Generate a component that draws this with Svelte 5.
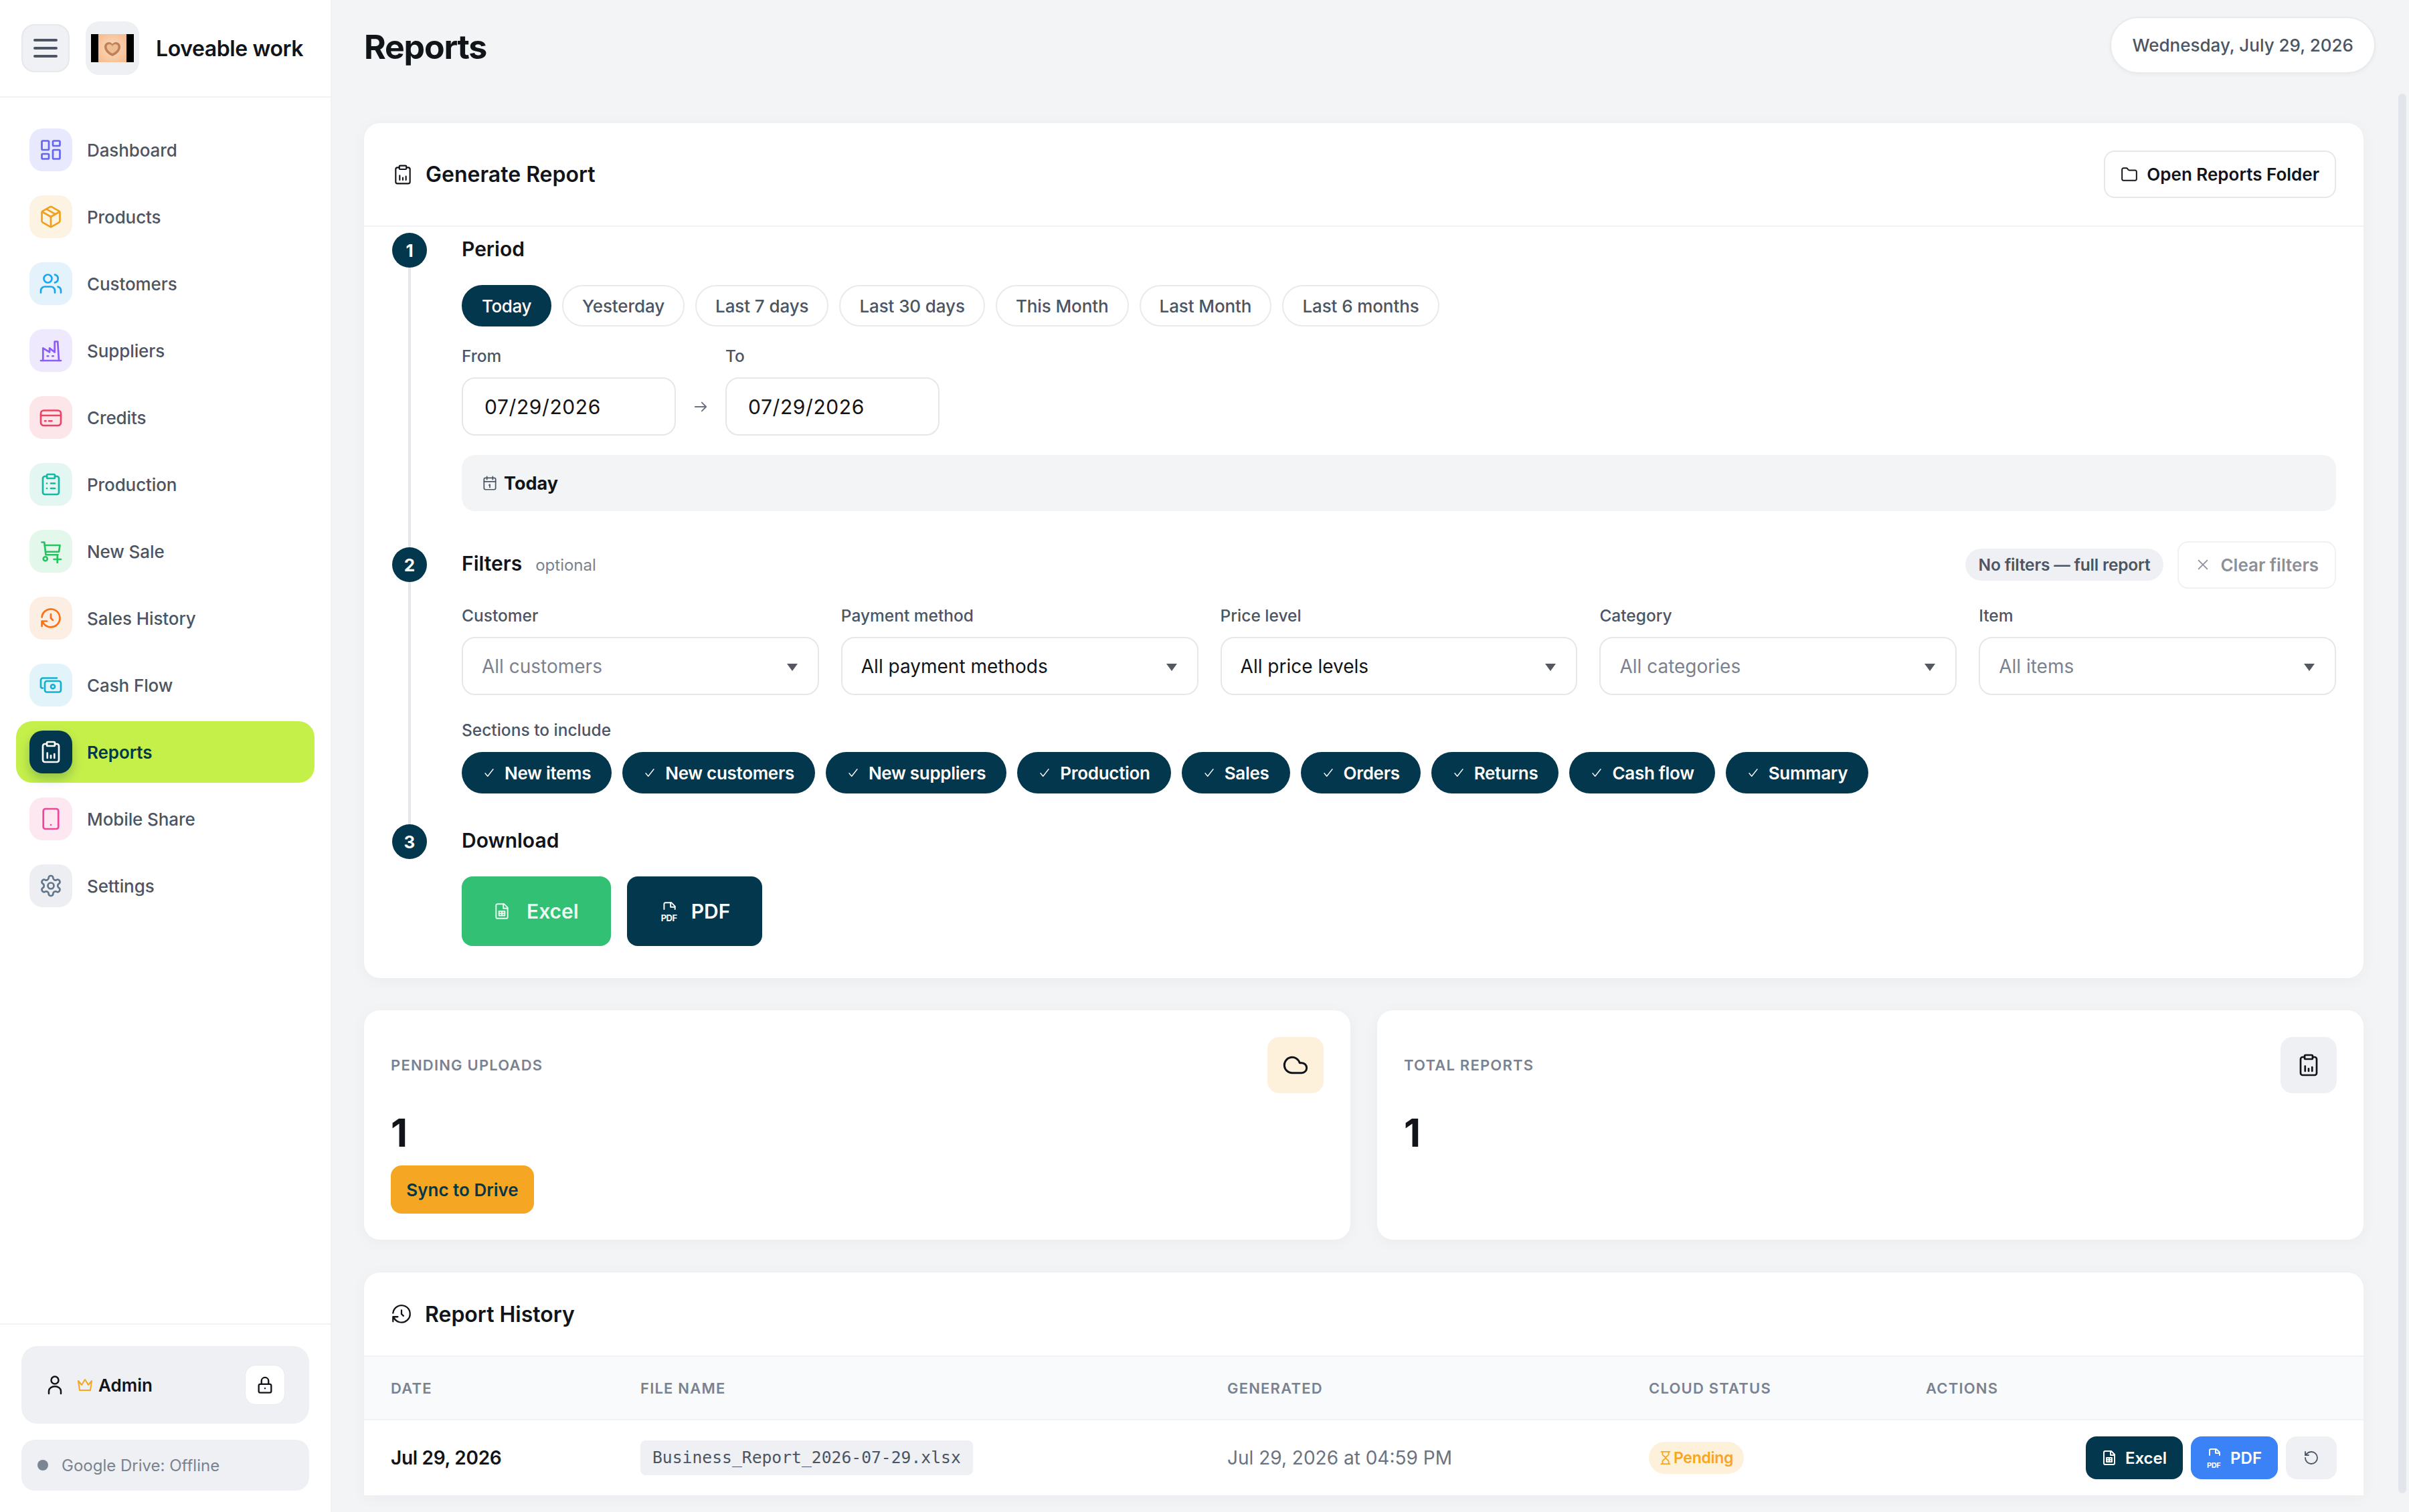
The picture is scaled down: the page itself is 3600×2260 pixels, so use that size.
<script>
	const icons = {
		dashboard: '<rect x="3" y="3" width="7" height="9" rx="1"/><rect x="14" y="3" width="7" height="5" rx="1"/><rect x="14" y="12" width="7" height="9" rx="1"/><rect x="3" y="16" width="7" height="5" rx="1"/>',
		box: '<path d="M21 8a2 2 0 0 0-1-1.730l-7-4a2 2 0 0 0-2 0l-7 4A2 2 0 0 0 3 8v8a2 2 0 0 0 1 1.730l7 4a2 2 0 0 0 2 0l7-4A2 2 0 0 0 21 16Z"/><path d="m3.300 7 8.700 5 8.700-5"/><path d="M12 22V12"/><path d="m7.500 4.300 9 5.100"/>',
		users: '<circle cx="9" cy="7" r="4"/><path d="M2 21v-2a4 4 0 0 1 4-4h6a4 4 0 0 1 4 4v2"/><path d="M16 3.100a4 4 0 0 1 0 7.800"/><path d="M22 21v-2a4 4 0 0 0-3-3.900"/>',
		factory: '<path d="M2 22h20"/><path d="M4.200 22V9.600l6.500 4V9.600l5.100 4V3h3L20 22"/><path d="M8.500 17.500h1M13.500 17.500h1"/>',
		card: '<rect x="2" y="5" width="20" height="15" rx="3"/><path d="M2 10h20"/><path d="M6 15.500h1M10 15.500h3"/>',
		clipboard: '<rect x="8" y="2" width="8" height="4" rx="1"/><path d="M16 4h2a2 2 0 0 1 2 2v14a2 2 0 0 1-2 2H6a2 2 0 0 1-2-2V6a2 2 0 0 1 2-2h2"/><path d="M12 11h4M12 16h4M8 11h.01M8 16h.01"/>',
		cart: '<path d="M3 3h2.500l1.500 12.500h12"/><path d="M6 6h15l-1 6.500H7"/><circle cx="6.500" cy="19.500" r="2"/><path d="M15 20h7M18.500 16.500v7"/>',
		history: '<path d="M12 8v4l2 2"/><path d="M3.050 11a9 9 0 1 1 .5 4m-.5 5v-5h5"/>',
		cash: '<rect x="6" y="8" width="16" height="11" rx="2"/><circle cx="14" cy="13.500" r="2"/><path d="M18 5H4a2 2 0 0 0-2 2v7a2 2 0 0 0 2 1"/>',
		report: '<rect x="8" y="2" width="8" height="4" rx="1"/><path d="M16 4h2a2 2 0 0 1 2 2v14a2 2 0 0 1-2 2H6a2 2 0 0 1-2-2V6a2 2 0 0 1 2-2h2"/><path d="M8.500 18v-5M12 18v-2.500M15.500 18v-4"/>',
		tablet: '<rect x="4.500" y="2" width="15" height="20" rx="2"/><path d="M12 18h.01"/>',
		gear: '<path d="M12.220 2h-.440a2 2 0 0 0-2 2v.180a2 2 0 0 1-1 1.730l-.430.250a2 2 0 0 1-2 0l-.150-.080a2 2 0 0 0-2.730.730l-.220.380a2 2 0 0 0 .730 2.730l.150.100a2 2 0 0 1 1 1.720v.510a2 2 0 0 1-1 1.740l-.150.090a2 2 0 0 0-.730 2.730l.220.380a2 2 0 0 0 2.730.730l.150-.080a2 2 0 0 1 2 0l.430.250a2 2 0 0 1 1 1.730V20a2 2 0 0 0 2 2h.440a2 2 0 0 0 2-2v-.180a2 2 0 0 1 1-1.730l.430-.250a2 2 0 0 1 2 0l.150.080a2 2 0 0 0 2.730-.730l.220-.390a2 2 0 0 0-.730-2.730l-.150-.080a2 2 0 0 1-1-1.740v-.500a2 2 0 0 1 1-1.740l.150-.090a2 2 0 0 0 .730-2.730l-.220-.380a2 2 0 0 0-2.730-.730l-.150.080a2 2 0 0 1-2 0l-.430-.250a2 2 0 0 1-1-1.730V4a2 2 0 0 0-2-2z"/><circle cx="12" cy="12" r="3"/>',
		calendar: '<rect x="4" y="5" width="16" height="16" rx="2"/><path d="M8 3v4M16 3v4M4 10h16M11 15l1-1v4"/>',
		folder: '<path d="M20 20a2 2 0 0 0 2-2V8a2 2 0 0 0-2-2h-7.900a2 2 0 0 1-1.700-.900l-.800-1.200A2 2 0 0 0 7.900 3H4a2 2 0 0 0-2 2v13a2 2 0 0 0 2 2Z"/>',
		cloud: '<path d="M17.500 19H9a7 7 0 1 1 6.700-9h1.800a4.500 4.500 0 1 1 0 9Z"/>',
		sheet: '<path d="M15 2H6a2 2 0 0 0-2 2v16a2 2 0 0 0 2 2h12a2 2 0 0 0 2-2V7Z"/><path d="M14 2v6h6"/><path d="M8 12h8v6H8zM12 12v6M8 15h8"/>',
		pdf: '<path d="M5 11V4a2 2 0 0 1 2-2h8l5 5v4"/><path d="M14 2v6h6"/>',
		hourglass: '<path d="M5 2h14M5 22h14"/><path d="M7 2v4.500c0 1.500 5 4 5 5.500s-5 4-5 5.500V22M17 2v4.500c0 1.500-5 4-5 5.500s5 4 5 5.500V22"/>',
		refresh: '<path d="M3 12a9 9 0 1 0 9-9 9.750 9.750 0 0 0-6.740 2.740L3 8"/><path d="M3 3v5h5"/>',
		lock: '<rect x="4" y="11" width="16" height="11" rx="2"/><path d="M7.500 11V7a4.500 4.500 0 0 1 9 0v4"/><path d="M12 16.500h.01"/>'
	};

	const nav = [
		{ label: 'Dashboard', icon: 'dashboard', tone: 'indigo' },
		{ label: 'Products', icon: 'box', tone: 'amber' },
		{ label: 'Customers', icon: 'users', tone: 'sky' },
		{ label: 'Suppliers', icon: 'factory', tone: 'violet' },
		{ label: 'Credits', icon: 'card', tone: 'rose' },
		{ label: 'Production', icon: 'clipboard', tone: 'teal' },
		{ label: 'New Sale', icon: 'cart', tone: 'green' },
		{ label: 'Sales History', icon: 'history', tone: 'orange' },
		{ label: 'Cash Flow', icon: 'cash', tone: 'cyan' },
		{ label: 'Reports', icon: 'report', tone: 'active' },
		{ label: 'Mobile Share', icon: 'tablet', tone: 'pink' },
		{ label: 'Settings', icon: 'gear', tone: 'slate' }
	];

	const periods = ['Today', 'Yesterday', 'Last 7 days', 'Last 30 days', 'This Month', 'Last Month', 'Last 6 months'];

	const filters = [
		{ label: 'Customer', value: 'All customers', empty: true },
		{ label: 'Payment method', value: 'All payment methods', empty: false },
		{ label: 'Price level', value: 'All price levels', empty: false },
		{ label: 'Category', value: 'All categories', empty: true },
		{ label: 'Item', value: 'All items', empty: true }
	];

	const sections = ['New items', 'New customers', 'New suppliers', 'Production', 'Sales', 'Orders', 'Returns', 'Cash flow', 'Summary'];
</script>

{#snippet icon(name, size = 36, stroke = 1.8)}
	<svg class="icon" width={size} height={size} viewBox="0 0 24 24" fill="none" stroke="currentColor" stroke-width={stroke} stroke-linecap="round" stroke-linejoin="round">
		{@html icons[name]}
	</svg>
{/snippet}

<div class="app">
	<aside class="sidebar">
		<div class="brand">
			<button class="burger" type="button" aria-label="Menu">
				<span></span><span></span><span></span>
			</button>
			<div class="logo">
				<svg width="64" height="42" viewBox="0 0 64 42">
					<defs>
						<radialGradient id="peach" cx="50%" cy="50%" r="70%">
							<stop offset="0" stop-color="#fbdcc0" />
							<stop offset="1" stop-color="#f6b98c" />
						</radialGradient>
					</defs>
					<rect width="64" height="42" fill="#000" />
					<rect x="11" width="42" height="42" fill="url(#peach)" />
					<path d="M32 33c-7-3-12-8-12-14 0-4 3-7 6.500-7 2.500 0 4.500 1 5.500 3 1-2 3-3 5.500-3 3.500 0 6.500 3 6.500 7 0 6-5 11-12 14Z" fill="#bf8258" />
					<path d="M32 29c-5-2.500-8.500-6-8.500-10 0-2.500 2-4 4-4s3.500 1 4.500 3c1-2 2.500-3 4.500-3s4 1.500 4 4c0 4-3.500 7.500-8.500 10Z" fill="#f0bd92" />
				</svg>
			</div>
			<span class="brand-name">Loveable work</span>
		</div>

		<nav class="nav">
			{#each nav as item}
				<div class="nav-item {item.tone}">
					<span class="nav-icon">{@render icon(item.icon)}</span>
					<span class="nav-label">{item.label}</span>
				</div>
			{/each}
		</nav>

		<div class="side-foot">
			<div class="user">
				<span class="user-person">
					<svg width="24" height="30" viewBox="0 0 24 30" fill="none" stroke="currentColor" stroke-width="2.500" stroke-linecap="round">
						<circle cx="12" cy="8" r="5.500" />
						<path d="M3 28v-4a8 6 0 0 1 18 0v4" />
					</svg>
				</span>
				<svg class="crown" width="24" height="20" viewBox="0 0 24 20" fill="none" stroke="#f5a623" stroke-width="2" stroke-linejoin="round">
					<path d="M2 4l5 6 5-8 5 8 5-6-2 14H4Z" />
				</svg>
				<span class="user-name">Admin</span>
				<button class="lock" type="button" aria-label="Lock">{@render icon('lock', 28, 2)}</button>
			</div>
			<div class="drive"><i></i>Google Drive: Offline</div>
		</div>
	</aside>

	<main class="main">
		<header class="topbar">
			<h1>Reports</h1>
			<div class="today-pill">Wednesday, July 29, 2026</div>
		</header>

		<div class="content">
			<section class="card">
				<div class="card-head">
					<h2>{@render icon('report', 32, 1.6)}Generate Report</h2>
					<button class="folder-btn" type="button">{@render icon('folder', 26, 1.8)}Open Reports Folder</button>
				</div>

				<div class="steps">
					<div class="step">
						<div class="rail"><b>1</b><span></span></div>
						<div class="step-body">
							<div class="step-title"><h3>Period</h3></div>
							<div class="chips">
								{#each periods as p, i}
									<button class="chip" class:on={i === 0} type="button">{p}</button>
								{/each}
							</div>
							<div class="dates">
								<label class="field">
									<span>From</span>
									<input type="text" value="07/29/2026" />
								</label>
								<span class="arrow">
									<svg width="22" height="22" viewBox="0 0 24 24" fill="none" stroke="currentColor" stroke-width="2" stroke-linecap="round" stroke-linejoin="round"><path d="M3 12h18M14 5l7 7-7 7" /></svg>
								</span>
								<label class="field">
									<span>To</span>
									<input type="text" value="07/29/2026" />
								</label>
							</div>
							<div class="range">{@render icon('calendar', 26, 1.6)}<strong>Today</strong></div>
						</div>
					</div>

					<div class="step">
						<div class="rail"><b>2</b><span></span></div>
						<div class="step-body">
							<div class="step-title">
								<h3>Filters</h3>
								<small>optional</small>
								<div class="filter-state">
									<span class="no-filters">No filters — full report</span>
									<button class="clear" type="button">
										<svg width="22" height="22" viewBox="0 0 24 24" fill="none" stroke="currentColor" stroke-width="1.800" stroke-linecap="round"><path d="M5 5l14 14M19 5L5 19" /></svg>
										Clear filters
									</button>
								</div>
							</div>
							<div class="filters">
								{#each filters as f}
									<label class="field">
										<span>{f.label}</span>
										<div class="select" class:empty={f.empty}>
											<select>
												<option>{f.value}</option>
											</select>
										</div>
									</label>
								{/each}
							</div>
							<div class="sections-label">Sections to include</div>
							<div class="sections">
								{#each sections as s}
									<button class="section" type="button">
										<svg width="18" height="18" viewBox="0 0 24 24" fill="none" stroke="currentColor" stroke-width="1.800" stroke-linecap="round" stroke-linejoin="round"><path d="M4 13l5 6L20 5" /></svg>
										{s}
									</button>
								{/each}
							</div>
						</div>
					</div>

					<div class="step last">
						<div class="rail"><b>3</b></div>
						<div class="step-body">
							<div class="step-title"><h3>Download</h3></div>
							<div class="downloads">
								<button class="dl excel" type="button">{@render icon('sheet', 26, 1.8)}Excel</button>
								<button class="dl pdf" type="button">
									<span class="pdf-mark">{@render icon('pdf', 26, 1.8)}<em>PDF</em></span>PDF
								</button>
							</div>
						</div>
					</div>
				</div>
			</section>

			<div class="stats">
				<section class="card stat">
					<div class="stat-head">
						<span class="stat-label">Pending uploads</span>
						<span class="stat-icon cream">{@render icon('cloud', 40, 1.8)}</span>
					</div>
					<div class="stat-value">1</div>
					<button class="sync" type="button">Sync to Drive</button>
				</section>
				<section class="card stat">
					<div class="stat-head">
						<span class="stat-label">Total reports</span>
						<span class="stat-icon gray">{@render icon('report', 36, 1.8)}</span>
					</div>
					<div class="stat-value">1</div>
				</section>
			</div>

			<section class="card history">
				<div class="card-head plain">
					<h2>{@render icon('history', 34, 1.6)}Report History</h2>
				</div>
				<table>
					<thead>
						<tr>
							<th class="c-date">Date</th>
							<th class="c-file">File name</th>
							<th class="c-gen">Generated</th>
							<th class="c-status">Cloud status</th>
							<th class="c-act">Actions</th>
						</tr>
					</thead>
					<tbody>
						<tr>
							<td class="date">Jul 29, 2026</td>
							<td><code>Business_Report_2026-07-29.xlsx</code></td>
							<td class="gen">Jul 29, 2026 at 04:59 PM</td>
							<td><span class="pending">{@render icon('hourglass', 22, 2)}Pending</span></td>
							<td>
								<div class="row-actions">
									<button class="mini navy" type="button">{@render icon('sheet', 24, 2)}Excel</button>
									<button class="mini blue" type="button">
										<span class="pdf-mark small">{@render icon('pdf', 24, 2)}<em>PDF</em></span>PDF
									</button>
									<button class="mini ghost" type="button" aria-label="Retry">{@render icon('refresh', 24, 1.8)}</button>
								</div>
							</td>
						</tr>
					</tbody>
				</table>
			</section>
		</div>

		<div class="scroll-thumb"></div>
	</main>
</div>

<style>
	:global(body) {
		margin: 0;
		background: #f3f4f6;
		font-family: Inter, 'Liberation Sans', sans-serif;
		color: #111418;
	}

	button,
	input,
	select {
		font-family: inherit;
	}

	button {
		cursor: pointer;
	}

	.icon {
		display: block;
		flex-shrink: 0;
	}

	.app {
		display: flex;
		height: 2260px;
		overflow: hidden;
	}

	/* Sidebar */
	.sidebar {
		width: 494px;
		flex-shrink: 0;
		box-sizing: content-box;
		background: #fff;
		border-right: 2px solid #f0f1f4;
		display: flex;
		flex-direction: column;
	}

	.brand {
		height: 144px;
		display: flex;
		align-items: center;
		padding-left: 32px;
		border-bottom: 2px solid #f1f2f5;
	}

	.burger {
		width: 72px;
		height: 72px;
		padding: 0;
		background: #eff1f5;
		border: 2px solid #e6e8ec;
		border-radius: 20px;
		display: flex;
		flex-direction: column;
		align-items: center;
		justify-content: center;
		gap: 8px;
	}

	.burger span {
		width: 36px;
		height: 4px;
		border-radius: 2px;
		background: #4b5563;
	}

	.logo {
		width: 80px;
		height: 80px;
		margin-left: 24px;
		background: #eef0f4;
		border-radius: 20px;
		display: flex;
		align-items: center;
		justify-content: center;
	}

	.brand-name {
		margin-left: 25px;
		font-size: 32px;
		font-weight: 600;
		letter-spacing: -0.4px;
		white-space: nowrap;
	}

	.nav {
		flex: 1;
		padding: 32px 24px 0;
		display: flex;
		flex-direction: column;
		gap: 8px;
	}

	.nav-item {
		height: 92px;
		box-sizing: border-box;
		padding: 0 20px;
		border-radius: 24px;
		display: flex;
		align-items: center;
		gap: 22px;
		font-size: 26px;
		font-weight: 500;
		letter-spacing: -0.1px;
		color: #4b5563;
	}

	.nav-icon {
		width: 64px;
		height: 64px;
		border-radius: 20px;
		display: flex;
		align-items: center;
		justify-content: center;
		flex-shrink: 0;
	}

	.indigo .nav-icon { background: #e9e9fd; color: #6366f1; }
	.amber .nav-icon { background: #fdf3e3; color: #f0a01e; }
	.sky .nav-icon { background: #e3f2fb; color: #1aa7ec; }
	.violet .nav-icon { background: #efe9fd; color: #8b5cf6; }
	.rose .nav-icon { background: #fde6ea; color: #ec4263; }
	.teal .nav-icon { background: #e3f6f1; color: #14b8a6; }
	.green .nav-icon { background: #e3f7ea; color: #22c55e; }
	.orange .nav-icon { background: #fdeee4; color: #f97316; }
	.cyan .nav-icon { background: #e2f4fa; color: #14b0cf; }
	.pink .nav-icon { background: #fde8f2; color: #ec4899; }
	.slate .nav-icon { background: #eceef2; color: #64748b; }

	.active {
		background: #c5f04a;
		color: #03374d;
		font-weight: 600;
	}

	.active .nav-icon {
		background: #03374d;
		color: #fff;
		box-shadow: 0 8px 16px rgba(3, 55, 77, 0.25);
	}

	.side-foot {
		border-top: 2px solid #f1f2f5;
		padding: 32px 32px 32px;
		display: flex;
		flex-direction: column;
		gap: 24px;
	}

	.user {
		height: 116px;
		box-sizing: border-box;
		padding: 0 36px 0 38px;
		background: #eef0f4;
		border-radius: 24px;
		display: flex;
		align-items: center;
	}

	.user-person {
		display: flex;
		color: #111418;
	}

	.crown {
		margin-left: 21px;
	}

	.user-name {
		margin-left: 8px;
		font-size: 26px;
		font-weight: 600;
	}

	.lock {
		margin-left: auto;
		width: 60px;
		height: 60px;
		padding: 0;
		background: #fff;
		border: 1px solid #e8eaee;
		border-radius: 16px;
		display: flex;
		align-items: center;
		justify-content: center;
		color: #111418;
	}

	.drive {
		height: 76px;
		padding-left: 24px;
		background: #eef0f4;
		border-radius: 20px;
		display: flex;
		align-items: center;
		gap: 20px;
		font-size: 24px;
		color: #7b828f;
	}

	.drive i {
		width: 16px;
		height: 16px;
		border-radius: 50%;
		background: #7c8594;
	}

	/* Main */
	.main {
		position: relative;
		flex: 1;
		min-width: 0;
		height: 2236px;
	}

	.topbar {
		height: 136px;
		box-sizing: border-box;
		padding: 25px 50px 0 48px;
		display: flex;
		align-items: flex-start;
		justify-content: space-between;
	}

	h1 {
		margin: 0;
		font-size: 50px;
		line-height: 90px;
		font-weight: 700;
		letter-spacing: -1.2px;
	}

	.today-pill {
		height: 85px;
		box-sizing: border-box;
		padding: 0 31px;
		background: #fff;
		border: 2px solid #e8eaee;
		border-radius: 43px;
		display: flex;
		align-items: center;
		font-size: 26px;
		font-weight: 500;
		color: #4b5563;
		box-shadow: 0 2px 6px rgba(0, 0, 0, 0.04);
	}

	.content {
		padding: 48px 68px 0 48px;
		display: flex;
		flex-direction: column;
		gap: 48px;
	}

	.card {
		background: #fff;
		border-radius: 24px;
		box-shadow: 0 4px 24px rgba(17, 24, 39, 0.04);
	}

	.card-head {
		height: 155px;
		box-sizing: border-box;
		padding: 0 41px 0 42px;
		border-bottom: 2px solid #f1f2f5;
		display: flex;
		align-items: center;
		justify-content: space-between;
	}

	h2 {
		margin: 0;
		display: flex;
		align-items: center;
		gap: 18px;
		font-size: 32px;
		font-weight: 600;
	}

	.folder-btn {
		height: 71px;
		padding: 0 23px;
		background: #fff;
		border: 2px solid #e5e7eb;
		border-radius: 16px;
		display: flex;
		align-items: center;
		gap: 13px;
		font-size: 26px;
		font-weight: 600;
		color: #111418;
	}

	/* Steps */
	.steps {
		padding: 9px 41px 48px 42px;
	}

	.step {
		display: flex;
		gap: 52px;
		padding-bottom: 54px;
	}

	.step:nth-child(2) {
		padding-bottom: 46px;
	}

	.step.last {
		padding-bottom: 0;
	}

	.rail {
		width: 52px;
		flex-shrink: 0;
		margin-bottom: -54px;
		display: flex;
		flex-direction: column;
		align-items: center;
	}

	.step:nth-child(2) .rail {
		margin-bottom: -46px;
	}

	.rail b {
		width: 52px;
		height: 52px;
		flex-shrink: 0;
		border-radius: 50%;
		background: #03374d;
		color: #fff;
		font-size: 26px;
		font-weight: 700;
		display: flex;
		align-items: center;
		justify-content: center;
	}

	.rail span {
		width: 4px;
		flex: 1;
		background: #e5e7eb;
	}

	.step-body {
		flex: 1;
		min-width: 0;
	}

	.step-title {
		height: 52px;
		display: flex;
		align-items: center;
		gap: 20px;
	}

	h3 {
		margin: 0 0 4px;
		font-size: 30px;
		font-weight: 600;
	}

	small {
		font-size: 24px;
		color: #7b828f;
	}

	.chips,
	.sections {
		display: flex;
		gap: 16px;
	}

	.chips {
		margin-top: 26px;
	}

	.chip {
		height: 62px;
		padding: 0 28px;
		background: #fff;
		border: 2px solid #e8eaee;
		border-radius: 31px;
		font-size: 26px;
		font-weight: 500;
		letter-spacing: -0.1px;
		color: #4b5563;
	}

	.chip.on {
		background: #03374d;
		border-color: #03374d;
		color: #fff;
		letter-spacing: -0.4px;
	}

	.field {
		display: block;
	}

	.field > span {
		display: block;
		font-size: 24.500px;
		font-weight: 500;
		line-height: 32px;
		margin-bottom: 16px;
		color: #4b5563;
	}

	.dates {
		margin-top: 28px;
		display: flex;
		align-items: flex-end;
	}

	input,
	select {
		display: block;
		width: 100%;
		height: 87px;
		box-sizing: border-box;
		background: #fff;
		border: 2px solid #e5e7eb;
		border-radius: 20px;
		outline: none;
		color: #111418;
	}

	input {
		width: 320px;
		padding: 0 32px;
		font-size: 30px;
		letter-spacing: 0.6px;
	}

	.arrow {
		width: 74px;
		height: 87px;
		display: flex;
		align-items: center;
		justify-content: center;
		color: #6b7280;
	}

	.range {
		margin-top: 29px;
		height: 84px;
		padding-left: 29px;
		background: #f3f4f6;
		border-radius: 20px;
		display: flex;
		align-items: center;
		gap: 8px;
		color: #4b5563;
	}

	.range strong {
		font-size: 27px;
		font-weight: 700;
		color: #111418;
	}

	.filter-state {
		margin-left: auto;
		display: flex;
		align-items: center;
		gap: 21px;
	}

	.no-filters {
		height: 48px;
		padding: 0 20px;
		background: #eef0f4;
		border-radius: 24px;
		display: flex;
		align-items: center;
		font-size: 24.500px;
		font-weight: 600;
		color: #4b5563;
		letter-spacing: -0.2px;
	}

	.clear {
		height: 71px;
		padding: 0 24px 0 25px;
		background: #fff;
		border: 2px solid #f0f1f4;
		border-radius: 16px;
		display: flex;
		align-items: center;
		gap: 15px;
		font-size: 26px;
		font-weight: 600;
		color: #8a8f98;
	}

	.filters {
		margin-top: 34px;
		display: grid;
		grid-template-columns: repeat(5, 1fr);
		gap: 33px;
	}

	.select {
		position: relative;
	}

	.select::after {
		content: '';
		position: absolute;
		right: 32px;
		top: 40px;
		border-left: 8px solid transparent;
		border-right: 8px solid transparent;
		border-top: 11px solid #55595f;
		pointer-events: none;
	}

	select {
		appearance: none;
		padding: 0 28px;
		font-size: 28px;
	}

	.empty select {
		color: #7b828f;
	}

	.sections-label {
		margin-top: 36px;
		font-size: 24.500px;
		font-weight: 500;
		line-height: 32px;
		color: #4b5563;
	}

	.sections {
		margin-top: 17px;
	}

	.section {
		height: 62px;
		padding: 0 31px 0 32px;
		background: #03374d;
		border: 0;
		border-radius: 31px;
		display: flex;
		align-items: center;
		gap: 14px;
		font-size: 26px;
		font-weight: 600;
		letter-spacing: -0.3px;
		color: #fff;
	}

	.downloads {
		margin-top: 26px;
		display: flex;
		gap: 24px;
	}

	.dl {
		height: 104px;
		padding: 0 48px 0 47px;
		border: 0;
		border-radius: 16px;
		display: flex;
		align-items: center;
		gap: 24px;
		font-size: 30px;
		font-weight: 600;
		color: #fff;
	}

	.excel {
		background: #31c074;
		color: #eafaf0;
	}

	.pdf {
		background: #03374d;
		padding-left: 50px;
		gap: 20px;
	}

	.pdf-mark {
		position: relative;
		display: block;
		height: 30px;
	}

	.pdf-mark em {
		position: absolute;
		left: 1px;
		bottom: -2px;
		font-style: normal;
		font-size: 13px;
		line-height: 13px;
		font-weight: 700;
		letter-spacing: -0.5px;
	}

	.pdf-mark.small em {
		font-size: 11px;
		line-height: 11px;
	}

	/* Stats */
	.stats {
		display: grid;
		grid-template-columns: 1fr 1fr;
		gap: 40px;
	}

	.stat {
		height: 343px;
		box-sizing: border-box;
		padding: 40px;
	}

	.stat-head {
		display: flex;
		align-items: center;
		justify-content: space-between;
	}

	.stat-label {
		font-size: 22px;
		font-weight: 600;
		letter-spacing: 1.200px;
		text-transform: uppercase;
		color: #7b828f;
	}

	.stat-icon {
		width: 84px;
		height: 84px;
		border-radius: 18px;
		display: flex;
		align-items: center;
		justify-content: center;
		color: #111418;
	}

	.cream {
		background: #fdf1dc;
	}

	.gray {
		background: #eef0f4;
	}

	.stat-value {
		margin-top: 19px;
		font-size: 58px;
		line-height: 80px;
		font-weight: 700;
	}

	.sync {
		margin-top: 9px;
		width: 214px;
		height: 72px;
		padding: 0;
		background: #f5a623;
		border: 0;
		border-radius: 16px;
		font-size: 26px;
		font-weight: 600;
		color: #03374d;
	}

	/* History */
	.history {
		margin-top: 1px;
		border-radius: 24px 24px 0 0;
	}

	.card-head.plain {
		height: 126px;
	}

	.plain h2 {
		margin-left: -3px;
		gap: 18px;
	}

	table {
		width: 100%;
		table-layout: fixed;
		border-collapse: collapse;
	}

	th {
		box-sizing: border-box;
		height: 94px;
		padding: 0 40px;
		background: #f9fafb;
		border-bottom: 2px solid #f1f2f5;
		text-align: left;
		font-size: 22px;
		font-weight: 600;
		letter-spacing: 1.200px;
		text-transform: uppercase;
		color: #7b828f;
	}

	.c-date { width: 373px; }
	.c-file { width: 877px; }
	.c-gen { width: 630px; }
	.c-status { width: 414px; }

	td {
		height: 112px;
		padding: 0 40px;
		font-size: 30px;
	}

	.date {
		font-size: 28px;
		font-weight: 600;
		letter-spacing: -0.3px;
	}

	.gen {
		color: #6b7280;
		font-size: 28px;
	}

	code {
		display: inline-block;
		height: 52px;
		line-height: 52px;
		padding: 0 18px;
		background: #eef0f4;
		border-radius: 8px;
		font-family: 'DejaVu Sans Mono', 'Liberation Mono', monospace;
		font-size: 24.700px;
		color: #4b5563;
	}

	.pending {
		display: inline-flex;
		align-items: center;
		gap: 1px;
		height: 48px;
		padding: 0 16px 0 14px;
		background: #fdf1dc;
		border-radius: 24px;
		font-size: 23px;
		font-weight: 600;
		color: #f5a623;
		letter-spacing: -0.3px;
	}

	.row-actions {
		display: flex;
		justify-content: flex-end;
		gap: 12px;
	}

	.mini {
		height: 64px;
		padding: 0 24px 0 23px;
		border: 0;
		border-radius: 16px;
		display: flex;
		align-items: center;
		gap: 12px;
		font-size: 24px;
		font-weight: 600;
		color: #fff;
	}

	.navy {
		background: #03374d;
	}

	.blue {
		background: #3b82f6;
	}

	.ghost {
		width: 76px;
		padding: 0;
		justify-content: center;
		background: #eef0f4;
		color: #4b5563;
	}

	.scroll-thumb {
		position: absolute;
		top: 140px;
		right: 4px;
		width: 12px;
		height: 2092px;
		border-radius: 6px;
		background: #e2e6ea;
	}
</style>
